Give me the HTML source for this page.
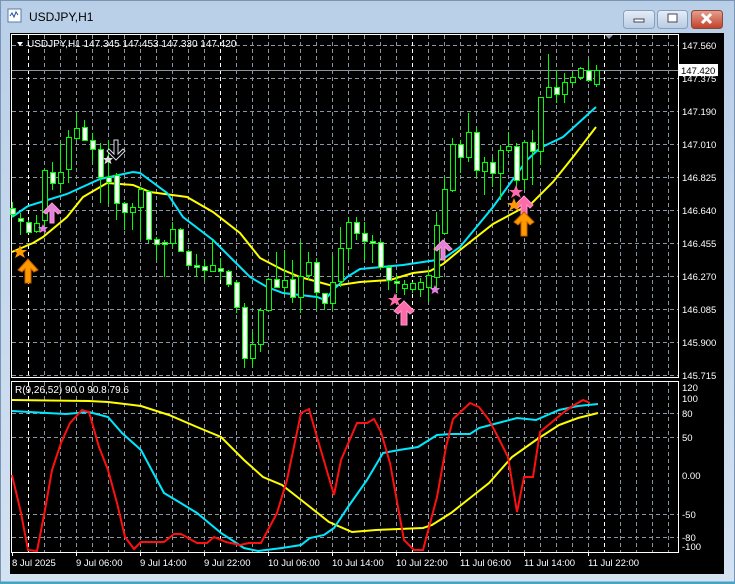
<!DOCTYPE html>
<html><head><meta charset="utf-8"><style>
html,body{margin:0;padding:0;width:735px;height:584px;overflow:hidden;background:#c9d9ec;font-family:"Liberation Sans",sans-serif}
</style></head><body>
<svg width="735" height="584" xmlns="http://www.w3.org/2000/svg" style="position:absolute;left:0;top:0" font-family="Liberation Sans, sans-serif">
<defs>
<linearGradient id="fr" x1="0" y1="0" x2="0" y2="1"><stop offset="0" stop-color="#b9cfe8"/><stop offset="1" stop-color="#d4e2f2"/></linearGradient>
<linearGradient id="bt" x1="0" y1="0" x2="0" y2="1"><stop offset="0" stop-color="#e6eef8"/><stop offset="1" stop-color="#b8cbe3"/></linearGradient>
<linearGradient id="cl" x1="0" y1="0" x2="0" y2="1"><stop offset="0" stop-color="#e8a090"/><stop offset="1" stop-color="#c0402a"/></linearGradient>
</defs>
<rect width="735" height="584" fill="url(#fr)"/>
<rect x="0.5" y="0.5" width="734" height="583" fill="none" stroke="#7a94b4"/>
<line x1="0" y1="582.5" x2="735" y2="582.5" stroke="#3aa8c8" stroke-width="2"/>
<!-- title -->
<rect x="8" y="9" width="13" height="13" fill="#fff" stroke="#5a7aa8"/>
<path d="M10 16 l2 -3 l2 4 l2 -5 l2 3" stroke="#2050a0" fill="none"/>
<text x="29" y="21" font-size="12" fill="#000">USDJPY,H1</text>
<rect x="623.5" y="10.5" width="31" height="18" rx="3" fill="url(#bt)" stroke="#8a9fbb"/>
<rect x="634" y="19" width="10" height="3" fill="#fff" stroke="#445"/>
<rect x="657.5" y="10.5" width="30" height="18" rx="3" fill="url(#bt)" stroke="#8a9fbb"/>
<rect x="668" y="14" width="9" height="8" fill="#fff" stroke="#445"/>
<rect x="691.5" y="10.5" width="31" height="18" rx="3" fill="url(#cl)" stroke="#8a4a3a"/>
<path d="M702 14 l9 9 M711 14 l-9 9" stroke="#fff" stroke-width="3"/>
<!-- chart area -->
<rect x="10" y="33" width="714" height="541" fill="#000"/>
<!-- grid main -->
<g stroke="#8a95a3" stroke-dasharray="4,3" stroke-width="1">
<path d="M12 45.5H678M12 78.5H678M12 111.5H678M12 144.5H678M12 177.5H678M12 210.5H678M12 243.5H678M12 276.5H678M12 309.5H678M12 342.5H678M12 375.5H678"/>
<path d="M44.5 35V377M60.5 35V377M76.5 35V377M92.5 35V377M108.5 35V377M124.5 35V377M140.5 35V377M156.5 35V377M172.5 35V377M188.5 35V377M204.5 35V377M236.5 35V377M252.5 35V377M268.5 35V377M284.5 35V377M300.5 35V377M316.5 35V377M332.5 35V377M348.5 35V377M364.5 35V377M380.5 35V377M396.5 35V377M428.5 35V377M444.5 35V377M460.5 35V377M476.5 35V377M492.5 35V377M508.5 35V377M524.5 35V377M540.5 35V377M556.5 35V377M572.5 35V377M588.5 35V377M620.5 35V377M636.5 35V377M652.5 35V377M668.5 35V377"/>
<path d="M12 413.5H678M12 437.5H678M12 514.5H678M12 537.5H678"/>
<path d="M44.5 382V552M60.5 382V552M76.5 382V552M92.5 382V552M108.5 382V552M124.5 382V552M140.5 382V552M156.5 382V552M172.5 382V552M188.5 382V552M204.5 382V552M236.5 382V552M252.5 382V552M268.5 382V552M284.5 382V552M300.5 382V552M316.5 382V552M332.5 382V552M348.5 382V552M364.5 382V552M380.5 382V552M396.5 382V552M428.5 382V552M444.5 382V552M460.5 382V552M476.5 382V552M492.5 382V552M508.5 382V552M524.5 382V552M540.5 382V552M556.5 382V552M572.5 382V552M588.5 382V552M620.5 382V552M636.5 382V552M652.5 382V552M668.5 382V552"/>
</g>
<g stroke="#fff" stroke-dasharray="4,3">
<path d="M28.5 35V377M220.5 35V377M412.5 35V377M604.5 35V377M28.5 382V552M220.5 382V552M412.5 382V552M604.5 382V552"/>
</g>
<line x1="12" y1="70.5" x2="678" y2="70.5" stroke="#8a95a3"/>
<path d="M604 34 h10 l-5 5z" fill="#8a95a3"/>
<!-- borders -->
<rect x="11.5" y="34.5" width="667" height="343" fill="none" stroke="#fff"/>
<rect x="11.5" y="381.5" width="667" height="171" fill="none" stroke="#fff"/>
<!-- MAs -->
<polyline fill="none" stroke="#ffff00" stroke-width="2" points="12,252 33,243 43,237 67,217 83,197 107,183 133,185 150,192 187,197 213,212 240,233 260,258 283,270 300,277 333,286 360,282 390,280 413,273 430,271 443,264 460,250 493,224 532,203 553,182 573,157 596,127"/>
<polyline fill="none" stroke="#00e8ff" stroke-width="2" points="12,217 28,206 67,194 100,179 133,172 140,173 167,193 183,217 213,240 233,260 250,277 267,287 283,293 317,297 325,300 333,290 347,277 360,269 403,265 443,259 460,247 493,207 527,160 540,148 563,137 596,107"/>
<!-- candles -->
<path stroke="#00ff00" stroke-width="1" d="M12.5 202V217M20.5 213V235M28.5 220V233M36.5 215V233M44.5 168V230M52.5 162V190M60.5 142V193M68.5 130V183M76.5 113V140M84.5 120V140M92.5 133V163M100.5 143V203M108.5 140V205M116.5 173V220M124.5 202V230M132.5 203V230M140.5 187V240M148.5 190V243M156.5 237V260M164.5 240V277M172.5 222V247M180.5 228V252M188.5 250V267M196.5 254V277M204.5 260V280M212.5 240V270M220.5 258V280M228.5 270V287M236.5 280V313M244.5 303V368M252.5 332V367M260.5 308V352M268.5 278V310M276.5 252V288M284.5 250V293M292.5 260V303M300.5 242V313M308.5 252V280M316.5 258V310M324.5 293V310M332.5 255V310M340.5 227V287M348.5 217V260M356.5 217V240M364.5 222V260M372.5 235V263M380.5 240V270M388.5 265V290M396.5 275V293M404.5 280V295M412.5 282V293M420.5 278V297M428.5 270V302M436.5 212V288M444.5 177V233M452.5 138V192M460.5 140V173M468.5 113V162M476.5 127V178M484.5 157V195M492.5 158V187M500.5 145V200M508.5 132V153M516.5 143V187M524.5 140V190M532.5 130V185M540.5 97V165M548.5 54V98M556.5 70V103M564.5 73V103M572.5 72V85M580.5 67V80M588.5 60V82M596.5 65V87"/>
<g stroke="#00ff00" stroke-width="1">
<g fill="#fff">
<rect x="10.5" y="208.5" width="5" height="6"/><rect x="18.5" y="218.5" width="5" height="3"/><rect x="26.5" y="222.5" width="5" height="10"/>
<rect x="50.5" y="172.5" width="5" height="11"/><rect x="82.5" y="127.5" width="5" height="13"/><rect x="90.5" y="140.5" width="5" height="9"/>
<rect x="98.5" y="149.5" width="5" height="28"/><rect x="106.5" y="177.5" width="5" height="5"/><rect x="114.5" y="175.5" width="5" height="28"/>
<rect x="122.5" y="203.5" width="5" height="9"/><rect x="146.5" y="191.5" width="5" height="48"/><rect x="154.5" y="239.5" width="5" height="5"/>
<rect x="162.5" y="242.5" width="5" height="2"/><rect x="178.5" y="229.5" width="5" height="22"/><rect x="186.5" y="251.5" width="5" height="14"/>
<rect x="194.5" y="265.5" width="5" height="2"/><rect x="202.5" y="266.5" width="5" height="4"/><rect x="218.5" y="268.5" width="5" height="3"/>
<rect x="226.5" y="271.5" width="5" height="13"/><rect x="234.5" y="282.5" width="5" height="25"/><rect x="242.5" y="307.5" width="5" height="51"/>
<rect x="274.5" y="279.5" width="5" height="8"/><rect x="290.5" y="279.5" width="5" height="18"/><rect x="314.5" y="262.5" width="5" height="30"/>
<rect x="322.5" y="293.5" width="5" height="10"/><rect x="354.5" y="222.5" width="5" height="11"/><rect x="362.5" y="233.5" width="5" height="8"/>
<rect x="370.5" y="241.5" width="5" height="2"/><rect x="378.5" y="242.5" width="5" height="25"/><rect x="386.5" y="267.5" width="5" height="13"/>
<rect x="394.5" y="281.5" width="5" height="2"/><rect x="458.5" y="144.5" width="5" height="13"/><rect x="474.5" y="132.5" width="5" height="38"/>
<rect x="490.5" y="162.5" width="5" height="11"/><rect x="514.5" y="146.5" width="5" height="34"/><rect x="530.5" y="142.5" width="5" height="9"/>
<rect x="554.5" y="87.5" width="5" height="7"/><rect x="586.5" y="70.5" width="5" height="10"/>
</g>
<g fill="#000">
<rect x="34.5" y="223.5" width="5" height="8"/><rect x="42.5" y="170.5" width="5" height="50"/><rect x="58.5" y="172.5" width="5" height="11"/>
<rect x="66.5" y="137.5" width="5" height="32"/><rect x="74.5" y="128.5" width="5" height="10"/><rect x="130.5" y="207.5" width="5" height="5"/>
<rect x="138.5" y="189.5" width="5" height="18"/><rect x="170.5" y="229.5" width="5" height="14"/><rect x="210.5" y="265.5" width="5" height="6"/>
<rect x="250.5" y="344.5" width="5" height="14"/><rect x="258.5" y="310.5" width="5" height="34"/><rect x="266.5" y="279.5" width="5" height="31"/>
<rect x="282.5" y="280.5" width="5" height="7"/><rect x="298.5" y="276.5" width="5" height="21"/><rect x="306.5" y="262.5" width="5" height="13"/>
<rect x="330.5" y="282.5" width="5" height="21"/><rect x="338.5" y="248.5" width="5" height="33"/><rect x="346.5" y="222.5" width="5" height="26"/>
<rect x="402.5" y="284.5" width="5" height="4"/><rect x="410.5" y="283.5" width="5" height="6"/><rect x="418.5" y="282.5" width="5" height="7"/>
<rect x="426.5" y="275.5" width="5" height="12"/><rect x="434.5" y="225.5" width="5" height="52"/><rect x="442.5" y="189.5" width="5" height="44"/>
<rect x="450.5" y="144.5" width="5" height="46"/><rect x="466.5" y="132.5" width="5" height="25"/><rect x="482.5" y="162.5" width="5" height="9"/>
<rect x="498.5" y="150.5" width="5" height="23"/><rect x="506.5" y="146.5" width="5" height="4"/><rect x="522.5" y="142.5" width="5" height="37"/>
<rect x="538.5" y="97.5" width="5" height="54"/><rect x="546.5" y="87.5" width="5" height="10"/><rect x="562.5" y="82.5" width="5" height="12"/>
<rect x="570.5" y="77.5" width="5" height="5"/><rect x="578.5" y="68.5" width="5" height="9"/><rect x="594.5" y="70.5" width="5" height="14"/>
</g></g>
<!-- markers -->
<g stroke-width="1">
<path d="M28 259 l10 11 l-4 2 l-3 -3 v14 h-6 v-14 l-3 3 l-4 -2z" fill="#ff9900" stroke="#c06000"/>
<path d="M52 203 l9 9 l-3 2 l-4 -4 v13 h-4 v-13 l-4 4 l-3 -2z" fill="#e080e0" stroke="#ff99cc"/>
<path d="M404 301 l10 10 l-4 3 l-3 -3 v14 h-6 v-14 l-3 3 l-4 -3z" fill="#ff6aa8" stroke="#ff99cc"/>
<path d="M443 240 l9 9 l-3 2 l-4 -4 v13 h-4 v-13 l-4 4 l-3 -2z" fill="#e080e0" stroke="#ff99cc"/>
<path d="M524 196 l9 9 l-3 3 l-3 -3 v10 h-6 v-10 l-3 3 l-3 -3z" fill="#ff6aa8" stroke="#ff99cc"/>
<path d="M524 212 l10 10 l-4 3 l-3 -3 v14 h-6 v-14 l-3 3 l-4 -3z" fill="#ff9900" stroke="#c06000"/>
<path d="M116 160 l-9 -9 l2 -2 l5 5 v-14 h4 v14 l5 -5 l2 2z" fill="#000" stroke="#dde"/>
</g>
<g>
<polygon points="20,245 22,250 27,250 23,253 25,258 20,255 15,258 17,253 13,250 18,250" fill="#ff9900"/>
<polygon points="43,224 44.5,227 48,227 45.5,229.5 46.5,233 43,231 39.5,233 40.5,229.5 38,227 41.5,227" fill="#e080e0"/>
<polygon points="108,155 109.5,158 113,158 110.5,160.5 111.5,164 108,162 104.5,164 105.5,160.5 103,158 106.5,158" fill="#ddd"/>
<polygon points="395,293 397,298 402,298 398,301 400,306 395,303 390,306 392,301 388,298 393,298" fill="#ff6aa8"/>
<polygon points="435,285 436.5,288 440,288 437.5,290.5 438.5,294 435,292 431.5,294 432.5,290.5 430,288 433.5,288" fill="#e080e0"/>
<polygon points="516,185 518,190 523,190 519,193 521,198 516,195 511,198 513,193 509,190 514,190" fill="#ff6aa8"/>
<polygon points="514,198 516,203 521,203 517,206 519,211 514,208 509,211 511,206 507,203 512,203" fill="#ff9900"/>
</g>
<!-- indicator lines -->
<polyline fill="none" stroke="#ffff00" stroke-width="2" points="12,400 89,401 108,402 141,406 169,415 197,427 221,437 244,460 263,477 282,485 305,503 329,522 352,532 376,530 423,528 432,525 451,513 470,498 489,483 512,457 536,440 559,425 578,418 598,413"/>
<polyline fill="none" stroke="#00e8ff" stroke-width="2" points="12,411 47,413 66,414 89,412 108,417 122,433 141,450 164,493 179,502 197,513 221,533 244,548 258,551 282,548 301,545 310,538 324,535 334,528 348,507 367,480 383,453 399,450 418,447 437,435 451,434 470,434 479,428 498,423 517,418 536,420 559,410 578,406 598,404"/>
<polyline fill="none" stroke="#ff1010" stroke-width="2" points="12,475 21,513 28,550 37,551 45,510 52,470 61,443 70,423 82,410 89,412 99,447 108,470 117,503 125,537 134,549 141,542 164,542 174,534 181,534 197,543 207,543 214,537 226,542 240,545 249,543 261,543 277,513 287,480 301,413 309,409 317,437 334,495 341,460 357,423 367,423 374,419 381,432 390,463 404,540 414,550 423,550 437,497 446,447 453,419 470,403 479,407 489,420 498,437 508,457 517,512 524,477 533,477 540,432 564,412 571,407 583,400 590,403"/>
<!-- texts -->
<g font-size="10" fill="#fff">
<path d="M17 42 h6 l-3 4z" fill="#fff"/>
<text x="27" y="47">USDJPY,H1  147.345 147.453 147.330 147.420</text>
<text x="15" y="393">R(9,26,52) 90.0 90.8 79.6</text>
<g font-size="9.5">
<text x="682" y="49">147.560</text><text x="682" y="82">147.375</text><text x="682" y="115">147.190</text><text x="682" y="148">147.010</text>
<text x="682" y="181">146.825</text><text x="682" y="214">146.640</text><text x="682" y="247">146.455</text><text x="682" y="280">146.270</text>
<text x="682" y="313">146.085</text><text x="682" y="346">145.900</text><text x="682" y="379">145.715</text>
<text x="682" y="391">120</text><text x="682" y="402">100</text><text x="682" y="417">80</text><text x="682" y="441">50</text>
<text x="682" y="479">0.00</text><text x="682" y="518">-50</text><text x="682" y="541">-80</text><text x="682" y="550">-100</text>
<text x="12" y="566">8 Jul 2025</text><text x="76" y="566">9 Jul 06:00</text><text x="140" y="566">9 Jul 14:00</text><text x="204" y="566">9 Jul 22:00</text>
<text x="268" y="566">10 Jul 06:00</text><text x="332" y="566">10 Jul 14:00</text><text x="396" y="566">10 Jul 22:00</text><text x="460" y="566">11 Jul 06:00</text>
<text x="524" y="566">11 Jul 14:00</text><text x="588" y="566">11 Jul 22:00</text>
</g></g>
<g stroke="#fff"><path d="M678.5 45v1M678.5 78v1M678.5 111v1M678.5 144v1M678.5 177v1M678.5 210v1M678.5 243v1M678.5 276v1M678.5 309v1M678.5 342v1M12.5 553v3M76.5 553v3M140.5 553v3M204.5 553v3M268.5 553v3M332.5 553v3M396.5 553v3M460.5 553v3M524.5 553v3M588.5 553v3"/></g>
<rect x="679" y="64" width="39" height="12" fill="#fff"/>
<text x="681" y="74" font-size="9.5" fill="#000">147.420</text>
</svg>
</body></html>
